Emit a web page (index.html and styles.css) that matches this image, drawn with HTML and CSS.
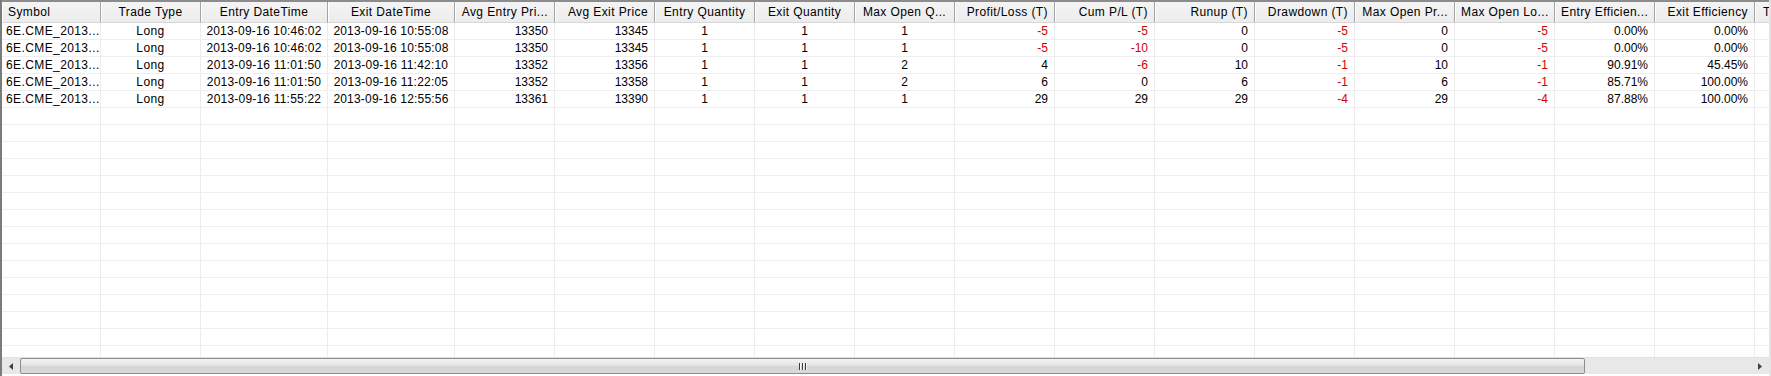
FILE: index.html
```html
<!DOCTYPE html>
<html>
<head>
<meta charset="utf-8">
<link rel="stylesheet" href="styles.css">
</head>
<body>
<div class="window">
  <div class="viewport">
    <div class="row hdr">
      <div class="cell w-sym l">Symbol</div>
      <div class="cell w-type c">Trade Type</div>
      <div class="cell w-dt c">Entry DateTime</div>
      <div class="cell w-dt c">Exit DateTime</div>
      <div class="cell r">Avg Entry Pri...</div>
      <div class="cell r">Avg Exit Price</div>
      <div class="cell c">Entry Quantity</div>
      <div class="cell c">Exit Quantity</div>
      <div class="cell c">Max Open Q...</div>
      <div class="cell r">Profit/Loss (T)</div>
      <div class="cell r">Cum P/L (T)</div>
      <div class="cell r">Runup (T)</div>
      <div class="cell r">Drawdown (T)</div>
      <div class="cell r">Max Open Pr...</div>
      <div class="cell r">Max Open Lo...</div>
      <div class="cell r">Entry Efficien...</div>
      <div class="cell r">Exit Efficiency</div>
      <div class="cell l last">Trade Duration</div>
    </div>

    <div class="row">
      <div class="cell w-sym l txt">6E.CME_2013...</div>
      <div class="cell w-type c txt">Long</div>
      <div class="cell w-dt c dt">2013-09-16 10:46:02</div>
      <div class="cell w-dt c dt">2013-09-16 10:55:08</div>
      <div class="cell r">13350</div>
      <div class="cell r">13345</div>
      <div class="cell c">1</div>
      <div class="cell c">1</div>
      <div class="cell c">1</div>
      <div class="cell r neg">-5</div>
      <div class="cell r neg">-5</div>
      <div class="cell r">0</div>
      <div class="cell r neg">-5</div>
      <div class="cell r">0</div>
      <div class="cell r neg">-5</div>
      <div class="cell r">0.00%</div>
      <div class="cell r">0.00%</div>
      <div class="cell l last"></div>
    </div>
    <div class="row">
      <div class="cell w-sym l txt">6E.CME_2013...</div>
      <div class="cell w-type c txt">Long</div>
      <div class="cell w-dt c dt">2013-09-16 10:46:02</div>
      <div class="cell w-dt c dt">2013-09-16 10:55:08</div>
      <div class="cell r">13350</div>
      <div class="cell r">13345</div>
      <div class="cell c">1</div>
      <div class="cell c">1</div>
      <div class="cell c">1</div>
      <div class="cell r neg">-5</div>
      <div class="cell r neg">-10</div>
      <div class="cell r">0</div>
      <div class="cell r neg">-5</div>
      <div class="cell r">0</div>
      <div class="cell r neg">-5</div>
      <div class="cell r">0.00%</div>
      <div class="cell r">0.00%</div>
      <div class="cell l last"></div>
    </div>
    <div class="row">
      <div class="cell w-sym l txt">6E.CME_2013...</div>
      <div class="cell w-type c txt">Long</div>
      <div class="cell w-dt c dt">2013-09-16 11:01:50</div>
      <div class="cell w-dt c dt">2013-09-16 11:42:10</div>
      <div class="cell r">13352</div>
      <div class="cell r">13356</div>
      <div class="cell c">1</div>
      <div class="cell c">1</div>
      <div class="cell c">2</div>
      <div class="cell r">4</div>
      <div class="cell r neg">-6</div>
      <div class="cell r">10</div>
      <div class="cell r neg">-1</div>
      <div class="cell r">10</div>
      <div class="cell r neg">-1</div>
      <div class="cell r">90.91%</div>
      <div class="cell r">45.45%</div>
      <div class="cell l last"></div>
    </div>
    <div class="row">
      <div class="cell w-sym l txt">6E.CME_2013...</div>
      <div class="cell w-type c txt">Long</div>
      <div class="cell w-dt c dt">2013-09-16 11:01:50</div>
      <div class="cell w-dt c dt">2013-09-16 11:22:05</div>
      <div class="cell r">13352</div>
      <div class="cell r">13358</div>
      <div class="cell c">1</div>
      <div class="cell c">1</div>
      <div class="cell c">2</div>
      <div class="cell r">6</div>
      <div class="cell r">0</div>
      <div class="cell r">6</div>
      <div class="cell r neg">-1</div>
      <div class="cell r">6</div>
      <div class="cell r neg">-1</div>
      <div class="cell r">85.71%</div>
      <div class="cell r">100.00%</div>
      <div class="cell l last"></div>
    </div>
    <div class="row">
      <div class="cell w-sym l txt">6E.CME_2013...</div>
      <div class="cell w-type c txt">Long</div>
      <div class="cell w-dt c dt">2013-09-16 11:55:22</div>
      <div class="cell w-dt c dt">2013-09-16 12:55:56</div>
      <div class="cell r">13361</div>
      <div class="cell r">13390</div>
      <div class="cell c">1</div>
      <div class="cell c">1</div>
      <div class="cell c">1</div>
      <div class="cell r">29</div>
      <div class="cell r">29</div>
      <div class="cell r">29</div>
      <div class="cell r neg">-4</div>
      <div class="cell r">29</div>
      <div class="cell r neg">-4</div>
      <div class="cell r">87.88%</div>
      <div class="cell r">100.00%</div>
      <div class="cell l last"></div>
    </div>

    <div class="row empty"><div class="cell w-sym"></div><div class="cell w-type"></div><div class="cell w-dt"></div><div class="cell w-dt"></div><div class="cell"></div><div class="cell"></div><div class="cell"></div><div class="cell"></div><div class="cell"></div><div class="cell"></div><div class="cell"></div><div class="cell"></div><div class="cell"></div><div class="cell"></div><div class="cell"></div><div class="cell"></div><div class="cell"></div><div class="cell last"></div></div>
    <div class="row empty"><div class="cell w-sym"></div><div class="cell w-type"></div><div class="cell w-dt"></div><div class="cell w-dt"></div><div class="cell"></div><div class="cell"></div><div class="cell"></div><div class="cell"></div><div class="cell"></div><div class="cell"></div><div class="cell"></div><div class="cell"></div><div class="cell"></div><div class="cell"></div><div class="cell"></div><div class="cell"></div><div class="cell"></div><div class="cell last"></div></div>
    <div class="row empty"><div class="cell w-sym"></div><div class="cell w-type"></div><div class="cell w-dt"></div><div class="cell w-dt"></div><div class="cell"></div><div class="cell"></div><div class="cell"></div><div class="cell"></div><div class="cell"></div><div class="cell"></div><div class="cell"></div><div class="cell"></div><div class="cell"></div><div class="cell"></div><div class="cell"></div><div class="cell"></div><div class="cell"></div><div class="cell last"></div></div>
    <div class="row empty"><div class="cell w-sym"></div><div class="cell w-type"></div><div class="cell w-dt"></div><div class="cell w-dt"></div><div class="cell"></div><div class="cell"></div><div class="cell"></div><div class="cell"></div><div class="cell"></div><div class="cell"></div><div class="cell"></div><div class="cell"></div><div class="cell"></div><div class="cell"></div><div class="cell"></div><div class="cell"></div><div class="cell"></div><div class="cell last"></div></div>
    <div class="row empty"><div class="cell w-sym"></div><div class="cell w-type"></div><div class="cell w-dt"></div><div class="cell w-dt"></div><div class="cell"></div><div class="cell"></div><div class="cell"></div><div class="cell"></div><div class="cell"></div><div class="cell"></div><div class="cell"></div><div class="cell"></div><div class="cell"></div><div class="cell"></div><div class="cell"></div><div class="cell"></div><div class="cell"></div><div class="cell last"></div></div>
    <div class="row empty"><div class="cell w-sym"></div><div class="cell w-type"></div><div class="cell w-dt"></div><div class="cell w-dt"></div><div class="cell"></div><div class="cell"></div><div class="cell"></div><div class="cell"></div><div class="cell"></div><div class="cell"></div><div class="cell"></div><div class="cell"></div><div class="cell"></div><div class="cell"></div><div class="cell"></div><div class="cell"></div><div class="cell"></div><div class="cell last"></div></div>
    <div class="row empty"><div class="cell w-sym"></div><div class="cell w-type"></div><div class="cell w-dt"></div><div class="cell w-dt"></div><div class="cell"></div><div class="cell"></div><div class="cell"></div><div class="cell"></div><div class="cell"></div><div class="cell"></div><div class="cell"></div><div class="cell"></div><div class="cell"></div><div class="cell"></div><div class="cell"></div><div class="cell"></div><div class="cell"></div><div class="cell last"></div></div>
    <div class="row empty"><div class="cell w-sym"></div><div class="cell w-type"></div><div class="cell w-dt"></div><div class="cell w-dt"></div><div class="cell"></div><div class="cell"></div><div class="cell"></div><div class="cell"></div><div class="cell"></div><div class="cell"></div><div class="cell"></div><div class="cell"></div><div class="cell"></div><div class="cell"></div><div class="cell"></div><div class="cell"></div><div class="cell"></div><div class="cell last"></div></div>
    <div class="row empty"><div class="cell w-sym"></div><div class="cell w-type"></div><div class="cell w-dt"></div><div class="cell w-dt"></div><div class="cell"></div><div class="cell"></div><div class="cell"></div><div class="cell"></div><div class="cell"></div><div class="cell"></div><div class="cell"></div><div class="cell"></div><div class="cell"></div><div class="cell"></div><div class="cell"></div><div class="cell"></div><div class="cell"></div><div class="cell last"></div></div>
    <div class="row empty"><div class="cell w-sym"></div><div class="cell w-type"></div><div class="cell w-dt"></div><div class="cell w-dt"></div><div class="cell"></div><div class="cell"></div><div class="cell"></div><div class="cell"></div><div class="cell"></div><div class="cell"></div><div class="cell"></div><div class="cell"></div><div class="cell"></div><div class="cell"></div><div class="cell"></div><div class="cell"></div><div class="cell"></div><div class="cell last"></div></div>
    <div class="row empty"><div class="cell w-sym"></div><div class="cell w-type"></div><div class="cell w-dt"></div><div class="cell w-dt"></div><div class="cell"></div><div class="cell"></div><div class="cell"></div><div class="cell"></div><div class="cell"></div><div class="cell"></div><div class="cell"></div><div class="cell"></div><div class="cell"></div><div class="cell"></div><div class="cell"></div><div class="cell"></div><div class="cell"></div><div class="cell last"></div></div>
    <div class="row empty"><div class="cell w-sym"></div><div class="cell w-type"></div><div class="cell w-dt"></div><div class="cell w-dt"></div><div class="cell"></div><div class="cell"></div><div class="cell"></div><div class="cell"></div><div class="cell"></div><div class="cell"></div><div class="cell"></div><div class="cell"></div><div class="cell"></div><div class="cell"></div><div class="cell"></div><div class="cell"></div><div class="cell"></div><div class="cell last"></div></div>
    <div class="row empty"><div class="cell w-sym"></div><div class="cell w-type"></div><div class="cell w-dt"></div><div class="cell w-dt"></div><div class="cell"></div><div class="cell"></div><div class="cell"></div><div class="cell"></div><div class="cell"></div><div class="cell"></div><div class="cell"></div><div class="cell"></div><div class="cell"></div><div class="cell"></div><div class="cell"></div><div class="cell"></div><div class="cell"></div><div class="cell last"></div></div>
    <div class="row empty"><div class="cell w-sym"></div><div class="cell w-type"></div><div class="cell w-dt"></div><div class="cell w-dt"></div><div class="cell"></div><div class="cell"></div><div class="cell"></div><div class="cell"></div><div class="cell"></div><div class="cell"></div><div class="cell"></div><div class="cell"></div><div class="cell"></div><div class="cell"></div><div class="cell"></div><div class="cell"></div><div class="cell"></div><div class="cell last"></div></div>
    <div class="row empty"><div class="cell w-sym"></div><div class="cell w-type"></div><div class="cell w-dt"></div><div class="cell w-dt"></div><div class="cell"></div><div class="cell"></div><div class="cell"></div><div class="cell"></div><div class="cell"></div><div class="cell"></div><div class="cell"></div><div class="cell"></div><div class="cell"></div><div class="cell"></div><div class="cell"></div><div class="cell"></div><div class="cell"></div><div class="cell last"></div></div>
  </div>

  <div class="hscroll">
    <div class="btn">
      <svg width="4" height="7" viewBox="0 0 4 7"><path d="M4 0 L0 3.5 L4 7 Z" fill="#404040"/></svg>
    </div>
    <div class="thumb">
      <svg class="grip" width="8" height="7" viewBox="0 0 8 7"><path d="M0 0h1v7H0zM3 0h1v7H3zM6 0h1v7H6z" fill="#3c3c3c"/><path d="M1 0h1v7H1zM4 0h1v7H4zM7 0h1v7H7z" fill="#f4f4f4"/></svg>
    </div>
    <div class="track"></div>
    <div class="btn">
      <svg width="4" height="7" viewBox="0 0 4 7"><path d="M0 0 L4 3.5 L0 7 Z" fill="#404040"/></svg>
    </div>
  </div>
</div>
</body>
</html>
```

FILE: styles.css
```css
html, body {
  margin: 0;
  padding: 0;
  background: #ffffff;
}

body {
  font-family: "Liberation Sans", Arial, sans-serif;
  font-size: 12px;
  color: #000000;
}

.window {
  width: 1771px;
  height: 376px;
  box-sizing: border-box;
  border-left: 2px solid #7b7b7b;
  border-right: 2px solid #e4e4e4;
  display: flex;
  flex-direction: column;
  overflow: hidden;
  background: #ffffff;
}

.viewport {
  flex: 0 0 357px;
  overflow: hidden;
}

.row {
  display: flex;
  height: 17px;
  line-height: 16px;
}

.cell {
  flex: 0 0 100px;
  box-sizing: border-box;
  padding: 0 6px;
  border-right: 1px solid #ececec;
  border-bottom: 1px solid #efefef;
  white-space: nowrap;
  overflow: hidden;
}

.w-sym { flex-basis: 99px; padding-left: 4px; }
.w-type { flex-basis: 100px; }
.w-dt { flex-basis: 127px; padding: 0 2px; }
.last { padding-left: 8px; }

.l { text-align: left; }
.c { text-align: center; }
.r { text-align: right; }

.txt { letter-spacing: 0.4px; }
.dt { letter-spacing: 0.2px; }

.neg { color: #d00000; }

.hdr {
  height: 23px;
  line-height: 20px;
  border-top: 2px solid #8c8c8c;
  box-sizing: border-box;
  background: #f0f0f0;
}

.hdr .cell {
  letter-spacing: 0.4px;
  border-right: 1px solid #a3a3a3;
  border-bottom: 1px solid #d8d8d8;
  box-shadow: inset 1px 0 0 #ffffff;
  background: linear-gradient(#f4f4f4, #ececec);
}

.hdr .w-sym { padding-left: 6px; }

.hscroll {
  flex: 0 0 17px;
  display: flex;
  background: #e8e8e8;
  border-top: 1px solid #e2e2e2;
  box-sizing: border-box;
}

.btn {
  flex: 0 0 18px;
  display: flex;
  align-items: center;
  justify-content: center;
}

.thumb {
  flex: 0 0 1565px;
  box-sizing: border-box;
  border: 1px solid #8d8d8d;
  border-radius: 2px;
  background: linear-gradient(#f3f3f3 0%, #e4e4e4 45%, #d5d5d5 55%, #dadada 100%);
  display: flex;
  align-items: center;
  justify-content: center;
}

.track {
  flex: 1 1 auto;
}
```
